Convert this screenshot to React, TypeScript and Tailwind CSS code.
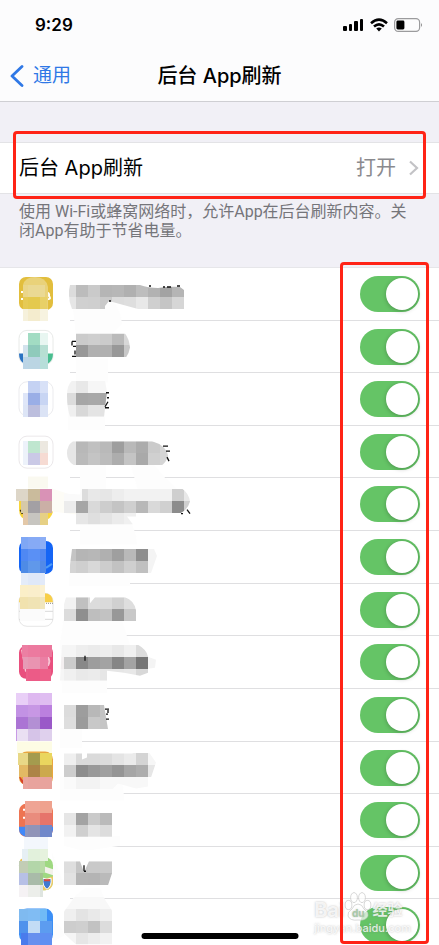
import React, { useState } from 'react'

// One strip of mosaic tiles: [top, right edge, "left:colour left:colour ..."]
type Band = [number, number, string]

type AppItem = {
  icon: React.ReactNode
  tint: Band[]
  smear: string
  label: Band[]
  shape: string
  ink?: string
}

const LIST_TOP = 268
const ROW = 684 / 13
const TILE = 12

const apps: AppItem[] = [
  {
    icon: (
      <>
        <rect x="19" y="277" width="34" height="33" rx="7" fill="#e2be3d" />
        <path d="M21 292h3M21 299h3M45 293q5-1 4 3q3 4-4 3M45 296h3" stroke="#fff" strokeWidth="2" fill="none" />
        <path d="M23 285q2-8 12-8q11 0 13 10v22h-25z" fill="#e9d27a" />
      </>
    ),
    tint: [
      [285, 45, '23:ead68a 28:ead994'],
      [297, 47, '23:e6ca55 28:e4c94e 40:e8d067'],
      [309, 48, '23:f6f1dc 28:f4ecce 40:f7f3e0'],
    ],
    smear: 'M72 300H112Q121 311 122 324L109 336H76z',
    label: [
      [285, 184, '69:dcdcdc 76:bcbcbc 88:cacaca 100:b5b5b5 112:b7b7b7 124:b0b0b0 136:bdbdbd 148:b2b2b2 160:a3a3a3 172:b5b5b5'],
      [297, 184, '69:e6e6e6 76:d0d0d0 88:cfcfcf 100:c9c9c9 112:dcdcdc 124:dedede 136:e8e8e8 148:cfcfcf 160:c5c5c5 172:d6d6d6'],
    ],
    shape: 'M70 285H140Q148 288 158 288Q172 286 180 287L184 290V309H138L109 301L105 306V309H72Q67 297 70 285z',
    ink: 'M149 286h2M163 287h2M167 287h4M177 286h3M109 301h2',
  },
  {
    icon: (
      <>
        <rect x="19" y="330" width="34" height="34" rx="8" fill="#fff" stroke="#e8eae8" />
        <path d="M19 353h5v10q-5-3-5-10z" fill="#2b73c2" />
        <path d="M53 353h-5v10q5-3 5-10z" fill="#49bd8f" />
      </>
    ),
    tint: [
      [333, 48, '28:a2dcc3 40:e8f6f1'],
      [345, 48, '23:d3e3ed 28:8fcabb 40:b7dfd3'],
      [357, 48, '23:bcd5e6 28:bbd5e3 40:b7ded9'],
    ],
    smear: 'M76 358H108V382H76z',
    label: [
      [333, 130, '76:cbcbcb 88:cecece 100:cbcbcb 112:bababa 124:d8d8d8'],
      [345, 130, '76:989898 88:b0b0b0 100:b0b0b0 112:989898 124:c8c8c8'],
    ],
    shape: 'M76 333H125Q129 338 130 347Q129 353 126 357H76z',
    ink: 'M72 341h4M72 341v4M73 346h3M75 350v4M72 356h4',
  },
  {
    icon: <rect x="19" y="382" width="34" height="34" rx="8" fill="#fff" stroke="#ebebee" />,
    tint: [
      [381, 48, '28:c5d2f3 40:d8e1f7'],
      [393, 48, '23:dfe6f8 28:9aaee6 40:c8d5f3'],
      [405, 48, '23:dde5f6 28:bcbedd 40:dbe3f5'],
    ],
    smear: 'M68 410H105V430H68z',
    label: [
      [381, 107, '67:f2f2f2 76:e8e8e8 88:f6f6f6'],
      [393, 107, '67:dcdcdc 76:a6a6a6 88:a8a8a8 100:a6a6a6'],
      [405, 105, '67:efefef 76:d8d8d8 88:e4e4e4 100:e3e3e3'],
    ],
    shape: 'M72 381H105L107 392L104 417H70Q67 408 67 396Q67 385 72 381z',
    ink: 'M106 393h3M107 398h2M108 402l-3 5M105 408h4',
  },
  {
    icon: <rect x="19" y="436" width="34" height="32" rx="8" fill="#fff" stroke="#ebe8ea" />,
    tint: [
      [441, 48, '23:edf2fa 28:bfe6cf 40:ece8e0'],
      [453, 48, '23:edf2fa 28:cac9e6 40:f6dbd3'],
    ],
    smear: 'M80 460H106V494H80zM130 462H152Q164 478 178 490H138z',
    label: [
      [441, 168, '67:e6e6e6 76:b8b8b8 88:c0c0c0 100:b9b9b9 112:9e9e9e 124:b9b9b9 136:acacac 148:cbcbcb 160:d5d5d5'],
      [453, 168, '67:e6e6e6 76:bababa 88:c4c4c4 100:bcbcbc 112:adadad 124:c4c4c4 136:a9a9a9 148:d0d0d0 160:d5d5d5'],
    ],
    shape: 'M73 441H152Q166 445 168 455Q167 461 162 465H74Q67 461 67 453Q67 445 73 441z',
    ink: 'M163 446h5M166 451h4M167 457l2 4',
  },
  {
    icon: (
      <>
        <rect x="28" y="477" width="20" height="12" fill="#faf9f0" />
        <path d="M19 500H53V512Q51 521 43 521H29Q19 520 19 510z" fill="#f8d53b" />
        <path d="M21 510l2 4" stroke="#3b2b13" strokeWidth="3" />
        <path d="M52 489L76 497V515L52 512z" fill="#fdfcf6" />
      </>
    ),
    tint: [
      [489, 52, '16:ddd6c8 28:cabb9c 40:d992b6'],
      [501, 52, '21:d6c9a8 28:a3a0a4 40:cbafa6'],
      [513, 48, '23:e3c8a8 28:c7c5c0 40:e6d085'],
    ],
    smear: 'M80 515H124Q136 526 137 545H80z',
    label: [
      [489, 190, '64:fafafa 82:dcdcdc 88:e8e8e8 100:e6e6e6 112:ededed 124:f2f2f2 172:cfcfcf 184:e8e8e8'],
      [501, 190, '64:ececec 76:a6a6a6 88:d9d9d9 100:cdcdcd 112:c4c4c4 124:cfcfcf 136:b8b8b8 148:d9d9d9 160:d0d0d0 172:8c8c8c 184:cfcfcf'],
      [513, 136, '76:e6e6e6 88:dfdfdf 100:e4e4e4 112:ebebeb 124:f0f0f0'],
    ],
    shape: 'M82 489H182Q189 494 190 502Q188 510 180 514L165 517H127L133 525H76L64 515V494L80 495z',
    ink: 'M181 514h2M187 510l3 4',
  },
  {
    icon: (
      <>
        <rect x="19" y="541" width="34" height="33" rx="7" fill="#1565f5" />
        <path d="M46 568l6-4" stroke="#4d9bf7" strokeWidth="2" />
      </>
    ),
    tint: [
      [537, 46, '21:7fa7f5 28:86aaf5 40:8caef5'],
      [549, 46, '21:4f88f3 28:5a90f5 40:5288f2'],
      [561, 46, '21:4e8be6 28:6098ea 40:528ae8'],
      [573, 45, '21:e4ecf9 28:dfe8f8 40:e2eaf9'],
    ],
    smear: 'M69 568H130V586H69z',
    label: [
      [549, 157, '70:c4c4c4 76:b5b5b5 88:b7b7b7 100:b0b0b0 112:9f9f9f 124:b9b9b9 136:8e8e8e 148:f4f4f4'],
      [561, 155, '70:d4d4d4 76:cfcfcf 88:d8d8d8 100:cdcdcd 112:c2c2c2 124:cfcfcf 136:c0c0c0 148:f4f4f4'],
    ],
    shape: 'M72 549H154L157 556L151 573H69z',
  },
  {
    icon: (
      <>
        <rect x="19" y="593" width="34" height="33" rx="8" fill="#fff" stroke="#e6e6e6" />
        <path d="M19 602Q19 593 28 593H44Q53 593 53 602z" fill="#f8cf48" />
        <path d="M20 603H53" stroke="#8a8a8a" strokeDasharray="1 1" />
        <path d="M19 611H53M19 619H53" stroke="#d9d9d9" />
      </>
    ),
    tint: [
      [585, 45, '20:fbefc8 28:faeecb 40:fbf1d2'],
      [597, 45, '20:f1e2ae 28:f0e3b4 40:f1e6bc'],
      [609, 45, '20:fbfbfb'],
    ],
    smear: 'M64 615H120L130 645H60z',
    label: [
      [597, 136, '64:f2f2f2 76:c0c0c0 88:dcdcdc 100:dadada 112:d0d0d0 124:dedede'],
      [609, 136, '64:dcdcdc 76:8f8f8f 88:bebebe 100:c2c2c2 112:989898 124:c8c8c8'],
    ],
    shape: 'M66 597H90V603L95 597H125Q134 600 136 610V621H64V604z',
  },
  {
    icon: (
      <>
        <rect x="19" y="646" width="34" height="33" rx="7" fill="#e94f7e" />
        <path d="M47 656q4 5 1 10M22 650l4 22" stroke="#f7c3d4" strokeWidth="2" fill="none" />
      </>
    ),
    tint: [
      [645, 52, '22:ec7fa3 28:ec7a9f 40:eb769b'],
      [657, 48, '23:e79ab6 28:e994b1 40:eb7fa4'],
      [669, 51, '26:ec5f8a 28:ec5b87 40:ed6089'],
    ],
    smear: 'M60 640H125V650H107V693H62z',
    label: [
      [645, 148, '60:f5f5f5 76:eeeeee 88:ebebeb 100:eeeeee 112:e8e8e8 124:f0f0f0 136:dcdcdc'],
      [657, 156, '60:f3eff0 64:cbcbcb 76:888888 88:9d9d9d 100:a3a3a3 112:868686 124:a3a3a3 136:757575 148:f4f4f4'],
      [669, 148, '60:f6f6f6 64:f0f0f0 76:e9e9e9 88:ebebeb 100:e6e6e6 124:e8e8e8 136:d8d8d8'],
    ],
    shape: 'M62 645H138Q147 650 148 657L156 660L155 668L148 669V673L140 676L124 673L107 671V681H60z',
    ink: 'M85 656v5',
  },
  {
    icon: <path d="M16 705H52V741H16z" fill="#c89be6" />,
    tint: [
      [693, 52, '16:e9cff7 28:deb8f0 40:dfbdf1'],
      [705, 52, '16:c292e4 28:c797e4 40:bb80df'],
      [717, 52, '16:ab74d4 28:b38fd4 40:9a59c8'],
      [729, 52, '17:eae0f3 28:d6c4e8 40:dfd0ed'],
    ],
    smear: 'M60 728H82V748H60z',
    label: [
      [705, 106, '64:dcdcdc 76:9d9d9d 88:b8b8b8 100:c3c3c3'],
      [717, 108, '64:dedede 76:9b9b9b 88:c8c8c8 100:c5c5c5'],
    ],
    shape: 'M64 705H104L108 729H64z',
    ink: 'M105 709h4M108 710v3M106 714h2M106 719h3',
  },
  {
    icon: (
      <>
        <rect x="17" y="741" width="35" height="12" fill="#fdfce4" />
        <rect x="19" y="751" width="34" height="34" rx="8" fill="#e9a63e" />
        <path d="M19 775L28 786Q20 784 19 775z" fill="#d8402a" />
      </>
    ),
    tint: [
      [753, 52, '18:e8d887 28:a49b4e 40:ead65e'],
      [765, 52, '19:e3b964 28:ad8447 40:cca94d'],
      [777, 52, '23:e9a69f 28:e8a39d'],
    ],
    smear: 'M60 776H120Q124 786 124 800H60z',
    label: [
      [753, 156, '64:efefef 76:dadada 100:dcdcdc 112:e4e4e4 124:ebebeb 136:d4d4d4 148:f6f6f6'],
      [765, 155, '64:cdcdcd 76:8d8d8d 88:999999 100:a0a0a0 112:959595 124:a6a6a6 136:adadad 148:e6e6e6'],
      [777, 148, '64:fafafa 76:f3f3f3 100:f8f8f8'],
    ],
    shape: 'M64 753H82V759L87 757V753H132L147 749L156 762L151 777L148 786L136 788L118 783L112 789H64z',
  },
  {
    icon: (
      <>
        <rect x="19" y="804" width="34" height="33" rx="7" fill="#ee7452" />
        <path d="M19 827H53V830Q52 837 45 837H27Q19 836 19 829z" fill="#4088f8" />
        <path d="M24 809v2M24 817v2M50 804v3" stroke="#fff" strokeWidth="2" />
      </>
    ),
    tint: [
      [801, 52, '25:efa494 40:efa28e'],
      [813, 52, '25:e98c7d 40:e6746b'],
      [825, 52, '25:8f97bf 28:9094b8 40:7088ca'],
      [837, 48, '24:f3f7fc'],
    ],
    smear: 'M64 836H120V846L93 850H79L64 846z',
    label: [
      [813, 112, '64:e6e6e6 76:a3a3a3 88:cacaca 100:bababa'],
      [825, 112, '64:f2f2f2 76:cfcfcf 88:e4e4e4 100:dcdcdc'],
    ],
    shape: 'M64 813H112V837H64z',
  },
  {
    icon: (
      <>
        <rect x="19" y="857" width="34" height="33" rx="8" fill="#9fd981" />
        <path d="M19 870V863Q20 858 25 857L19 870z" fill="#efc04f" />
        <path d="M44 866L53 869V875L44 872z" fill="#f3f1ea" />
        <path d="M40 880L53 876V882Q52 890 45 890H38z" fill="#ecc964" />
        <path d="M43 878q4 2 8 0q1 8-4 11q-5-3-4-11z" fill="#3f7ad0" stroke="#fff" />
        <path d="M44 880h6" stroke="#d8483c" strokeWidth="2" />
      </>
    ),
    tint: [
      [849, 48, '22:e6eff4 28:e2f1dc 40:e6f2de'],
      [861, 45, '19:c2cdb5 28:b3d6a9 40:b8dba5'],
      [873, 43, '19:b7c0e6 28:a9bba9 40:a3c48f'],
      [885, 43, '19:f5f2f4 28:eceeea 40:dfe5e0'],
    ],
    smear: 'M52 852L64 885H54zM75 896L85 888H100L106 902H70z',
    label: [
      [861, 112, '64:dedede 76:c5c5c5 88:c9c9c9 100:cacaca'],
      [873, 112, '64:e2e2e2 76:b5b5b5 88:b4b4b4 100:bababa'],
    ],
    shape: 'M64 861H80L84 872L89 861H112V873L108 885H64z',
    ink: 'M84 865v6M84 871h2',
  },
  {
    icon: <rect x="19" y="909" width="34" height="34" rx="8" fill="#3b8ff6" />,
    tint: [
      [909, 47, '19:7fbaf0 28:80bcf3 40:6fbaf6'],
      [921, 52, '19:4f92ec 28:c3dcf5 40:5c9cf0'],
      [933, 52, '21:4a7bec 28:6790ee 40:5f90f2'],
    ],
    smear: 'M52 922Q63 926 64 936L52 943z',
    label: [
      [897, 112, '64:f8f8f8'],
      [909, 112, '64:efefef 76:e3e3e3 88:e9e9e9 100:efefef'],
      [921, 112, '64:cdcdcd 76:cfcfcf 88:c2c2c2 100:dcdcdc'],
      [933, 112, '64:f5f5f5 76:e6e6e6 88:ededed 100:f2f2f2'],
    ],
    shape: 'M75 897H103L112 911V945H76L64 934V912z',
  },
]

function Tiles({ bands }: { bands: Band[] }) {
  return (
    <g shapeRendering="crispEdges">
      {bands.map(([y, end, row]) => {
        const cells = row.split(' ').map((cell) => cell.split(':'))
        return cells.map(([x, color], i) => {
          const right = i + 1 < cells.length ? Number(cells[i + 1][0]) : end
          return <rect key={`${y}-${x}`} x={x} y={y} width={right - Number(x)} height={TILE} fill={`#${color}`} />
        })
      })}
    </g>
  )
}

function AppRow({ app, index }: { app: AppItem; index: number }) {
  const [enabled, setEnabled] = useState(true)
  const id = `app-${index}`

  return (
    <li className="relative flex items-start justify-between pr-[19px] after:absolute after:bottom-0 after:left-[70px] after:right-0 after:h-px after:bg-[#dfdfe1]">
      <label htmlFor={id} className="relative z-10 block">
        <svg
          className="block h-[52px] w-[200px] overflow-visible"
          viewBox={`0 ${LIST_TOP + index * ROW} 200 52`}
          role="img"
          aria-label={`App ${index + 1}`}
        >
          <path d={app.smear} fill="#fdfdfd" />
          {app.icon}
          <Tiles bands={app.tint} />
          <clipPath id={`${id}-shape`}>
            <path d={app.shape} />
          </clipPath>
          <g clipPath={`url(#${id}-shape)`}>
            <Tiles bands={app.label} />
          </g>
          {app.ink && <path d={app.ink} stroke="#111" strokeWidth="1.3" fill="none" />}
        </svg>
      </label>
      <input
        id={id}
        type="checkbox"
        role="switch"
        checked={enabled}
        onChange={() => setEnabled(!enabled)}
        className="relative mt-2 h-9 w-[60px] cursor-pointer appearance-none rounded-full bg-[#e9e9eb] checked:bg-[#65c466] before:absolute before:left-[2px] before:top-[2px] before:size-8 before:rounded-full before:bg-white before:shadow-[0_1px_4px_rgba(0,0,0,0.25)] checked:before:left-[26px]"
      />
    </li>
  )
}

function StatusBar() {
  return (
    <div className="flex h-[50px] items-center justify-between pl-[35px] pr-4">
      <span className="text-[17px] font-semibold leading-5">9:29</span>
      <div className="flex items-center gap-[6px]">
        <svg width="21" height="14" viewBox="0 0 21 14">
          <rect x="0" y="8" width="4" height="5" rx="1" />
          <rect x="6" y="6" width="3" height="7" rx="1" />
          <rect x="11" y="3" width="4" height="10" rx="1" />
          <rect x="17" y="1" width="3" height="12" rx="1" />
        </svg>
        <svg width="18" height="14" viewBox="0 0 18 14" fill="none" stroke="#000" strokeWidth="2.6">
          <path d="M1 5.2Q9 -1.8 17 5.2" />
          <path d="M4 8.6Q9 4.2 14 8.6" />
          <path d="M6.2 10.6Q9 8.4 11.8 10.6L9 13.4z" fill="#000" stroke="none" />
        </svg>
        <svg width="29" height="14" viewBox="0 0 29 14">
          <rect x="0.6" y="0.6" width="25" height="12.8" rx="3.6" fill="none" stroke="#9b9b9d" strokeWidth="1.2" />
          <rect x="2.4" y="2.6" width="8" height="8.8" rx="1.4" />
          <path d="M27 5Q29 7 27 9z" fill="#8c8c8e" />
        </svg>
      </div>
    </div>
  )
}

function Watermark() {
  return (
    <div
      className="pointer-events-none absolute bottom-[11px] right-7 z-20 whitespace-nowrap text-white/80 [text-shadow:0_0_2px_rgba(120,120,120,0.5)]"
      aria-hidden="true"
    >
      <div className="flex items-end">
        <span className="text-[20px] font-bold leading-6">Bai</span>
        <svg className="shrink-0" width="28" height="30" viewBox="0 0 28 30" fill="rgba(255,255,255,0.7)" stroke="rgba(190,190,190,0.6)">
          <ellipse cx="4.5" cy="13" rx="3.4" ry="4.6" />
          <ellipse cx="10" cy="5.6" rx="3.4" ry="5" />
          <ellipse cx="18" cy="5.6" rx="3.4" ry="5" />
          <ellipse cx="23.5" cy="13" rx="3.4" ry="4.6" />
          <path d="M14 12Q18 12 20 17Q25 20 24 24Q22 29 14 28Q6 29 4 24Q3 20 8 17Q10 12 14 12z" />
          <text x="8" y="25" fontSize="10" fontWeight="700" fill="#a8c9a8" stroke="none">du</text>
        </svg>
        <span className="text-[15px] font-bold leading-6">经验</span>
      </div>
      <p className="text-[11px] font-medium leading-3">jingyan.baidu.com</p>
    </div>
  )
}

export default function App() {
  return (
    <main className="relative h-screen overflow-hidden bg-white font-['Inter','Noto_Sans_CJK_SC',sans-serif] text-black">
      <header className="border-b border-[#cfcfd3] bg-[#fcfcfd]">
        <StatusBar />
        <nav className="grid h-[51px] grid-cols-[1fr_auto_1fr] items-center">
          <a href="#general" className="flex items-center gap-[9px] pl-[10px] text-[19px] leading-6 text-[#2f78e6]">
            <svg width="14" height="22" viewBox="0 0 14 22" fill="none" stroke="currentColor" strokeWidth="2.8" strokeLinecap="round" strokeLinejoin="round">
              <path d="M12 1.5L2 11L12 20.5" />
            </svg>
            通用
          </a>
          <h1 className="text-xl font-medium leading-6">后台 App刷新</h1>
        </nav>
      </header>

      <section className="bg-[#f1f0f6] pt-10">
        <div className="relative">
          <a href="#refresh" className="flex h-[52px] items-center border-y border-[#e3e3e6] bg-white pl-[19px] pr-5">
            <span className="flex-1 text-xl">后台 App刷新</span>
            <span className="text-xl text-[#8a8a8e]">打开</span>
            <svg className="ml-3" width="11" height="16" viewBox="0 0 11 16" fill="none" stroke="#c3c3c6" strokeWidth="2.2">
              <path d="M2 1.5L9 8L2 14.5" />
            </svg>
          </a>
          <div className="pointer-events-none absolute -bottom-[5px] -top-[11px] left-[13px] right-[13px] rounded-[4px] border-3 border-[#ff2316]" />
        </div>
        <p className="px-[19px] pb-[27px] pt-2 font-['Roboto','Noto_Sans_CJK_SC',sans-serif] text-base leading-[19px] text-[#75757a]">
          使用 Wi-Fi或蜂窝网络时，允许App在后台刷新内容。关闭App有助于节省电量。
        </p>
      </section>

      <ul className="grid min-h-[685px] auto-rows-fr border-t border-[#e6e6e9]">
        {apps.map((app, index) => (
          <AppRow key={index} app={app} index={index} />
        ))}
      </ul>

      <Watermark />
      <div className="pointer-events-none absolute bottom-px right-[10px] top-[262px] z-20 w-[89px] rounded-[4px] border-3 border-[#ff2316]" />
      <div className="absolute bottom-[6px] left-1/2 z-30 h-[6px] w-[157px] -translate-x-1/2 rounded-full bg-black" />
    </main>
  )
}
